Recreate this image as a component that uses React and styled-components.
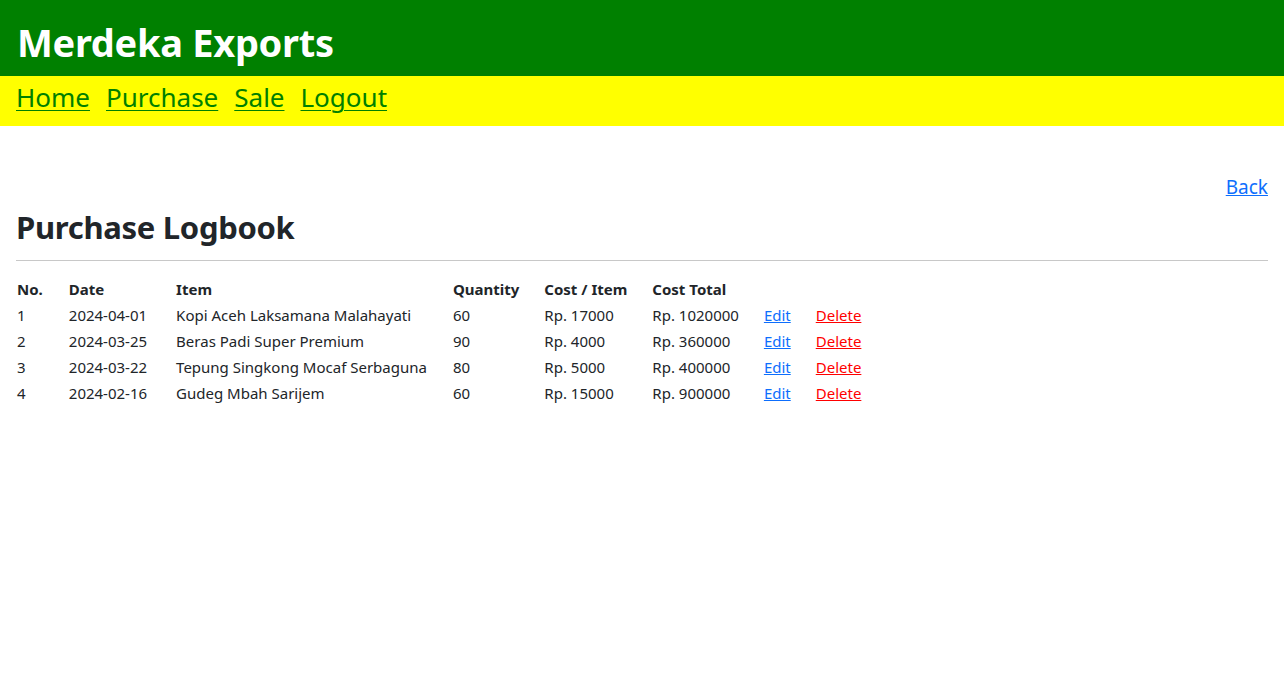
import React from 'react';
import styled, { createGlobalStyle } from 'styled-components';

const GlobalStyle = createGlobalStyle`
    body {
        margin: 0;
        font-family: "Noto Sans", "Open Sans", sans-serif;
        color: #212529;
        background: #fff;
    }
`;

const Header = styled.header`
    background: #008000;
    height: 76px;
    box-sizing: border-box;
    padding: 10px 17px 0;
    display: flex;
    align-items: center;
`;

const Brand = styled.h1`
    margin: 0;
    color: #fff;
    font-size: 38px;
    font-weight: 700;
    line-height: 1.2;
    letter-spacing: -0.3px;
`;

const Nav = styled.nav`
    background: #ffff00;
    height: 50px;
    box-sizing: border-box;
    padding: 0 16px 8px;
    display: flex;
    align-items: center;
    gap: 16px;
`;

const NavLink = styled.a`
    color: #008000;
    font-size: 26px;
    text-decoration: underline;
    text-underline-offset: 3px;
    text-decoration-thickness: 1px;
`;

const Main = styled.main`
    padding: 48px 16px 0;
`;

const TopRow = styled.div`
    display: flex;
    justify-content: flex-end;
`;

const Link = styled.a`
    color: ${p => p.$danger ? '#ff0000' : '#0d6efd'};
    font-size: ${p => p.$big ? '19px' : 'inherit'};
    text-decoration: underline;
    cursor: pointer;
`;

const Title = styled.h2`
    margin: 9px 0 0;
    font-size: 31px;
    font-weight: 700;
    line-height: 1.2;
    letter-spacing: -0.3px;
`;

const Rule = styled.hr`
    border: 0;
    border-top: 1px solid #c8c8c8;
    margin: 14px 0 15px;
`;

const Table = styled.table`
    border-collapse: collapse;
    font-size: 15px;
`;

const Th = styled.th`
    text-align: left;
    font-weight: 700;
    padding: 1px ${p => p.$pad || 24}px 1px 1px;
    line-height: 24px;
    white-space: nowrap;
`;

const Td = styled.td`
    padding: 1px ${p => p.$pad || 24}px 1px 1px;
    line-height: 24px;
    white-space: nowrap;
`;

const rows = [
    { no: 1, date: '2024-04-01', item: 'Kopi Aceh Laksamana Malahayati', qty: 60, cost: 17000, total: 1020000 },
    { no: 2, date: '2024-03-25', item: 'Beras Padi Super Premium', qty: 90, cost: 4000, total: 360000 },
    { no: 3, date: '2024-03-22', item: 'Tepung Singkong Mocaf Serbaguna', qty: 80, cost: 5000, total: 400000 },
    { no: 4, date: '2024-02-16', item: 'Gudeg Mbah Sarijem', qty: 60, cost: 15000, total: 900000 },
];

export default function App() {
    return (
        <>
            <GlobalStyle />
            <Header>
                <Brand>Merdeka Exports</Brand>
            </Header>
            <Nav>
                <NavLink href="#">Home</NavLink>
                <NavLink href="#">Purchase</NavLink>
                <NavLink href="#">Sale</NavLink>
                <NavLink href="#">Logout</NavLink>
            </Nav>
            <Main>
                <TopRow>
                    <Link $big href="#">Back</Link>
                </TopRow>
                <Title>Purchase Logbook</Title>
                <Rule />
                <Table>
                    <thead>
                        <tr>
                            <Th $pad={25}>No.</Th>
                            <Th>Date</Th>
                            <Th>Item</Th>
                            <Th>Quantity</Th>
                            <Th>Cost / Item</Th>
                            <Th>Cost Total</Th>
                            <Th></Th>
                            <Th></Th>
                        </tr>
                    </thead>
                    <tbody>
                        {rows.map(r => (
                            <tr key={r.no}>
                                <Td $pad={25}>{r.no}</Td>
                                <Td $pad={28}>{r.date}</Td>
                                <Td $pad={25}>{r.item}</Td>
                                <Td>{r.qty}</Td>
                                <Td>Rp. {r.cost}</Td>
                                <Td>Rp. {r.total}</Td>
                                <Td><Link href="#">Edit</Link></Td>
                                <Td><Link $danger href="#">Delete</Link></Td>
                            </tr>
                        ))}
                    </tbody>
                </Table>
            </Main>
        </>
    );
}
